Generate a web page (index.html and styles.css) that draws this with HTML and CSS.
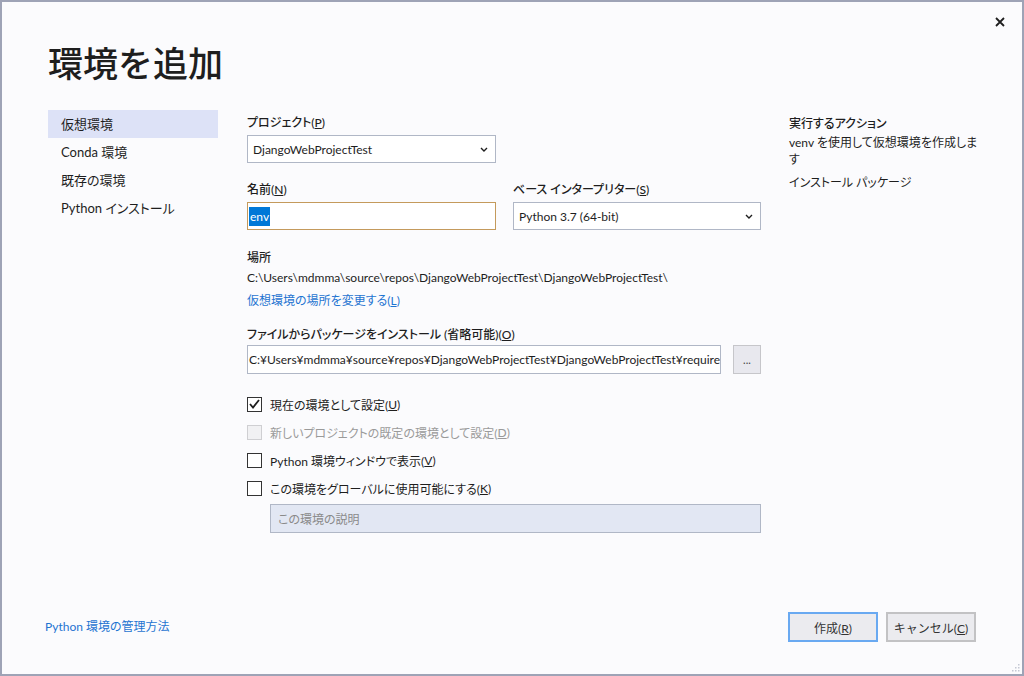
FILE: index.html
```html
<!DOCTYPE html>
<html lang="ja">
  <head>
    <meta charset="UTF-8" />
    <title>環境を追加</title>
    <link rel="stylesheet" href="styles.css">
  </head>
  <body>
    <div class="dialog">
      <button class="close" aria-label="閉じる">
        <svg width="10" height="10" viewBox="0 0 10 10"><path d="M1 1 L9 9 M9 1 L1 9" stroke="#1e1e1e" stroke-width="1.8" /></svg>
      </button>

      <h1 class="title">環境を追加</h1>

      <div class="content">
        <ul class="nav">
          <li class="nav-item active">仮想環境</li>
          <li class="nav-item">Conda 環境</li>
          <li class="nav-item">既存の環境</li>
          <li class="nav-item">Python インストール</li>
        </ul>

        <div class="main">
          <div class="row">
            <div class="field">
              <label class="label">プロジェクト(<u>P</u>)</label>
              <div class="select">
                <span>DjangoWebProjectTest</span>
                <svg class="chevron" width="8" height="5" viewBox="0 0 8 5"><path d="M1 1 L4 4 L7 1" fill="none" stroke="#1e1e1e" stroke-width="1.4" /></svg>
              </div>
            </div>
          </div>

          <div class="row two">
            <div class="field">
              <label class="label">名前(<u>N</u>)</label>
              <div class="input focus"><span class="selected">env</span></div>
            </div>
            <div class="field">
              <label class="label">ベース インタープリター(<u>S</u>)</label>
              <div class="select">
                <span>Python 3.7 (64-bit)</span>
                <svg class="chevron" width="8" height="5" viewBox="0 0 8 5"><path d="M1 1 L4 4 L7 1" fill="none" stroke="#1e1e1e" stroke-width="1.4" /></svg>
              </div>
            </div>
          </div>

          <div class="location">
            <div class="label">場所</div>
            <div class="path">C:\Users\mdmma\source\repos\DjangoWebProjectTest\DjangoWebProjectTest\</div>
            <a class="link" href="#">仮想環境の場所を変更する(<u>L</u>)</a>
          </div>

          <div class="field packages">
            <label class="label">ファイルからパッケージをインストール (省略可能)(<u>O</u>)</label>
            <div class="file-row">
              <div class="input file">C:¥Users¥mdmma¥source¥repos¥DjangoWebProjectTest¥DjangoWebProjectTest¥require</div>
              <button class="browse">...</button>
            </div>
          </div>

          <div class="checks">
            <div class="check">
              <span class="box">
                <svg width="11" height="10" viewBox="0 0 11 10"><path d="M1 5 L4 8.5 L10 1" fill="none" stroke="#1e1e1e" stroke-width="1.8" /></svg>
              </span>
              現在の環境として設定(<u>U</u>)
            </div>
            <div class="check disabled">
              <span class="box"></span>
              新しいプロジェクトの既定の環境として設定(<u>D</u>)
            </div>
            <div class="check">
              <span class="box"></span>
              Python 環境ウィンドウで表示(<u>V</u>)
            </div>
            <div class="check">
              <span class="box"></span>
              この環境をグローバルに使用可能にする(<u>K</u>)
            </div>
            <div class="input desc">この環境の説明</div>
          </div>
        </div>

        <div class="summary">
          <div class="summary-title">実行するアクション</div>
          <p class="summary-text">venv を使用して仮想環境を作成しま<br>す</p>
          <p class="summary-text">インストール パッケージ</p>
        </div>
      </div>

      <div class="footer">
        <a class="link" href="#">Python 環境の管理方法</a>
        <div class="buttons">
          <button class="btn primary">作成(<u>R</u>)</button>
          <button class="btn">キャンセル(<u>C</u>)</button>
        </div>
      </div>

      <svg class="grip" width="10" height="10" viewBox="0 0 10 10">
        <rect x="8" y="2" width="1.5" height="1.5" fill="#c4c8d4" />
        <rect x="5" y="5" width="1.5" height="1.5" fill="#c4c8d4" />
        <rect x="8" y="5" width="1.5" height="1.5" fill="#c4c8d4" />
        <rect x="2" y="8" width="1.5" height="1.5" fill="#c4c8d4" />
        <rect x="5" y="8" width="1.5" height="1.5" fill="#c4c8d4" />
        <rect x="8" y="8" width="1.5" height="1.5" fill="#c4c8d4" />
      </svg>
    </div>
  </body>
</html>
```

FILE: styles.css
```css
body {
  margin: 0;
  font-family: "Lato", "Noto Sans CJK JP", sans-serif;
  font-size: 12px;
  font-feature-settings: "palt";
  color: #1e1e1e;
  background: #fbfbfd;
}

.dialog {
  position: relative;
  width: 1024px;
  height: 676px;
  box-sizing: border-box;
  border: 2px solid #9ea3b6;
  background: #fbfbfd;
  display: flex;
  flex-direction: column;
}

.close {
  position: absolute;
  top: 12px;
  right: 14px;
  width: 16px;
  height: 16px;
  padding: 0;
  border: none;
  background: transparent;
  display: flex;
  align-items: center;
  justify-content: center;
}

.title {
  margin: 38px 0 0 46px;
  font-family: "Noto Sans CJK JP", sans-serif;
  font-feature-settings: normal;
  font-size: 35px;
  line-height: 44px;
  font-weight: 500;
  color: #1e1e1e;
}

.content {
  display: flex;
  margin-top: 26px;
}

.nav {
  list-style: none;
  margin: 0 0 0 46px;
  padding: 0;
  width: 170px;
  font-size: 13px;
}

.nav-item {
  height: 28px;
  line-height: 28px;
  padding-left: 13px;
}

.nav-item.active {
  background: #dde2f7;
}

.main {
  margin-left: 29px;
  width: 514px;
  padding-top: 4px;
}

.label {
  display: block;
  line-height: 18px;
  font-weight: 500;
  margin-bottom: 3px;
}

.row {
  display: flex;
  gap: 17px;
}

.row .field {
  width: 249px;
}

.row.two {
  margin-top: 18px;
}

.row.two .field:last-child {
  width: 248px;
}

.select,
.input {
  box-sizing: border-box;
  height: 28px;
  border: 1px solid #b0b7c6;
  background: #fff;
  display: flex;
  align-items: center;
  padding: 0 5px;
  white-space: nowrap;
  overflow: hidden;
}

.select {
  justify-content: space-between;
  padding-right: 7px;
}

.input.focus {
  border-color: #c49a5c;
  padding-left: 1px;
}

.selected {
  background: #0078d7;
  color: #fff;
  line-height: 19px;
  padding: 0 1px;
}

.location {
  margin-top: 19px;
}

.location .label {
  margin-bottom: 2px;
}

.path {
  line-height: 18px;
}

.link {
  display: inline-block;
  color: #1f74d1;
  text-decoration: none;
  line-height: 18px;
  margin-top: 5px;
}

.link u {
  text-decoration: underline;
}

.packages {
  margin-top: 16px;
}

.packages .label {
  margin-bottom: 1px;
}

.file-row {
  display: flex;
  gap: 12px;
}

.input.file {
  width: 474px;
  height: 29px;
  padding-left: 1px;
  flex-shrink: 0;
}

.browse {
  width: 28px;
  height: 29px;
  padding: 0;
  border: 1px solid #c6c6ca;
  background: #e8e8ee;
  font-family: inherit;
  font-size: 11px;
  color: #444;
}

.checks {
  margin-top: 16px;
}

.check {
  display: flex;
  align-items: center;
  height: 28px;
}

.box {
  box-sizing: border-box;
  width: 15px;
  height: 15px;
  border: 1px solid #333;
  background: #fff;
  margin-right: 8px;
  display: flex;
  align-items: center;
  justify-content: center;
}

.check.disabled {
  color: #9a9a9a;
}

.check.disabled .box {
  border-color: #cfcfd2;
  background: #f1f1f3;
}

.input.desc {
  margin: 2px 0 0 23px;
  width: 491px;
  height: 29px;
  background: #e2e7f3;
  color: #8a8a8a;
  padding-left: 7px;
}

.summary {
  margin-left: 28px;
  width: 190px;
  padding-top: 5px;
}

.summary-title {
  font-weight: 500;
  line-height: 18px;
}

.summary-text {
  margin: 1px 0 6px;
  line-height: 17px;
  white-space: nowrap;
}

.footer {
  margin-top: auto;
  display: flex;
  align-items: center;
  justify-content: space-between;
  padding: 0 46px 32px 43px;
}

.footer .link {
  margin-top: 0;
}

.buttons {
  display: flex;
  gap: 8px;
}

.btn {
  box-sizing: border-box;
  width: 90px;
  height: 30px;
  border: 2px solid #c2c2c4;
  background: #ebebef;
  font-family: inherit;
  font-size: 12px;
  color: #333;
  padding: 0;
}

.btn.primary {
  border-color: #69a9f1;
}

.grip {
  position: absolute;
  right: 2px;
  bottom: 2px;
}
```
